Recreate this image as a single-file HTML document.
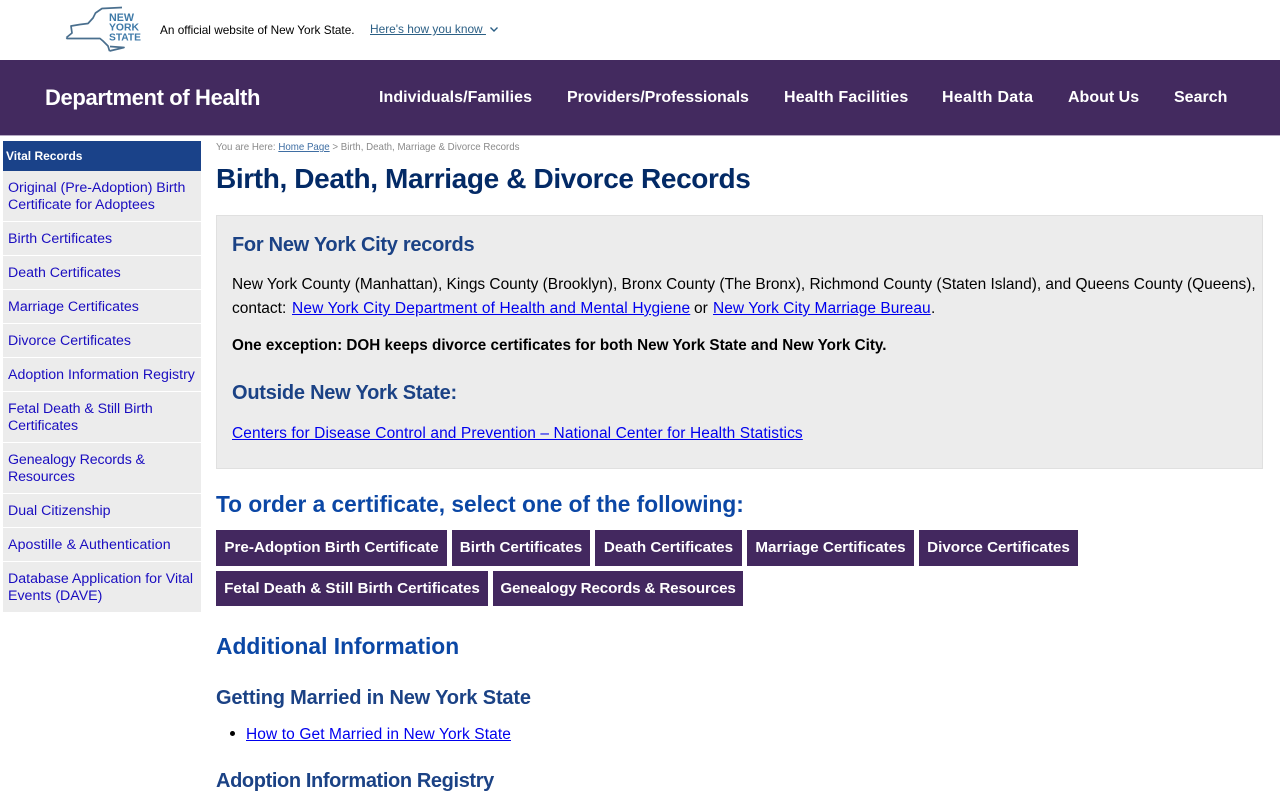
<!DOCTYPE html>
<html lang="en">
<head>
<meta charset="utf-8">
<title>Birth, Death, Marriage &amp; Divorce Records</title>
<style>
html,body{margin:0;padding:0;width:1280px;height:800px;overflow:hidden;background:#fff}
body{position:relative;font-family:"Liberation Sans",sans-serif;color:#000}
.t{position:absolute;white-space:nowrap;line-height:20px;margin:0;font-weight:normal}
.b{font-weight:bold}
a{color:#0000ee;text-decoration:underline}
.box{position:absolute}
.side{position:absolute;left:3px;width:198px;background:#ececec}
.side a{position:absolute;left:5px;top:9px;font-size:14.2px;line-height:17px;color:#1a0dc0;text-decoration:none;white-space:nowrap}
.btn{position:absolute;height:36px;background:#43285f;color:#fff;font-weight:bold;font-size:15.2px;line-height:36px;text-align:center;text-decoration:none;white-space:nowrap}
.nav{position:absolute;top:88px;color:#fff;font-weight:bold;font-size:16px;line-height:20px;white-space:nowrap;text-decoration:none}
h2.c,h3.c{color:#1b4285}
</style>
</head>
<body>
<svg class="box" style="left:60px;top:0" width="90" height="58" viewBox="60 0 90 58" fill="none">
<path d="M66.5 37.5 L72 33 L71 26 L80 24.5 L88 23.5 L93 18 L95.5 13 L102 8.5 L122 7.5 M66.5 37.5 L67 38.5 L100 38.5 L103 41 L108 46 L109.5 51 M109.5 51 L124 47.5 L110 46.5 M109.5 51 L122 48" stroke="#4a6f8e" stroke-width="1.7" stroke-linejoin="round"/>
<text x="109" y="21" font-family="Liberation Sans" font-weight="bold" font-size="11" fill="#3f7aa8" textLength="25" lengthAdjust="spacingAndGlyphs">NEW</text>
<text x="109" y="30.5" font-family="Liberation Sans" font-weight="bold" font-size="10.5" fill="#3f7aa8" textLength="30" lengthAdjust="spacingAndGlyphs">YORK</text>
<text x="109" y="40.5" font-family="Liberation Sans" font-weight="bold" font-size="10.5" fill="#3f7aa8" textLength="32" lengthAdjust="spacingAndGlyphs">STATE</text>
</svg>
<div class="t" style="left:160px;top:20px;font-size:11.8px">An official website of New York State.</div>
<a class="t" style="left:370px;top:19px;font-size:11.9px;color:#2b5f85" href="#">Here's how you know&nbsp;</a>
<svg class="box" style="left:489px;top:26px" width="10" height="7" viewBox="0 0 10 7" fill="none"><path d="M1.5 1.5 L5 5 L8.5 1.5" stroke="#2b5f85" stroke-width="1.4"/></svg>

<div class="box" style="left:0;top:60px;width:1280px;height:75px;background:#432a5f"></div>
<div class="box" style="left:0;top:135px;width:1280px;height:1px;background:#b5a9c2"></div>
<div class="t b" style="left:45px;top:88px;font-size:22px;color:#fff;letter-spacing:-.37px">Department of Health</div>
<a class="nav" style="left:379px;letter-spacing:.05px" href="#">Individuals/Families</a>
<a class="nav" style="left:567px;letter-spacing:-.06px" href="#">Providers/Professionals</a>
<a class="nav" style="left:784px;letter-spacing:.15px" href="#">Health Facilities</a>
<a class="nav" style="left:942px;letter-spacing:.3px" href="#">Health Data</a>
<a class="nav" style="left:1068px" href="#">About Us</a>
<a class="nav" style="left:1174px" href="#">Search</a>

<div class="box" style="left:3px;top:141px;width:198px;height:30px;background:#1a4289"></div>
<div class="t b" style="left:6px;top:146px;font-size:12px;color:#fff">Vital Records</div>
<div class="side" style="top:171px;height:50px"><a style="letter-spacing:-.03px" href="#">Original (Pre-Adoption) Birth<br>Certificate for Adoptees</a></div>
<div class="side" style="top:222px;height:33px"><a href="#">Birth Certificates</a></div>
<div class="side" style="top:256px;height:33px"><a href="#">Death Certificates</a></div>
<div class="side" style="top:290px;height:33px"><a href="#">Marriage Certificates</a></div>
<div class="side" style="top:324px;height:33px"><a href="#">Divorce Certificates</a></div>
<div class="side" style="top:358px;height:33px"><a href="#">Adoption Information Registry</a></div>
<div class="side" style="top:392px;height:50px"><a style="letter-spacing:-.08px" href="#">Fetal Death &amp; Still Birth<br>Certificates</a></div>
<div class="side" style="top:443px;height:50px"><a style="letter-spacing:-.1px" href="#">Genealogy Records &amp;<br>Resources</a></div>
<div class="side" style="top:494px;height:33px"><a href="#">Dual Citizenship</a></div>
<div class="side" style="top:528px;height:33px"><a style="letter-spacing:.1px" href="#">Apostille &amp; Authentication</a></div>
<div class="side" style="top:562px;height:50px"><a href="#">Database Application for Vital<br>Events (DAVE)</a></div>

<div class="t" style="left:216px;top:138px;font-size:9.72px;color:#8a8a8a">You are Here: <a href="#" style="color:#3f6ea3">Home Page</a> &gt; Birth, Death, Marriage &amp; Divorce Records</div>
<h1 class="t b" style="left:216px;top:169px;font-size:28px;color:#032a66;letter-spacing:-.37px">Birth, Death, Marriage &amp; Divorce Records</h1>

<div class="box" style="left:216px;top:215px;width:1045px;height:252px;background:#ececec;border:1px solid #e0e0e0"></div>
<h2 class="t b c" style="left:232px;top:235px;font-size:20px;letter-spacing:-.28px">For New York City records</h2>
<div class="t" style="left:232px;top:275px;font-size:15.45px">New York County (Manhattan), Kings County (Brooklyn), Bronx County (The Bronx), Richmond County (Staten Island), and Queens County (Queens),</div>
<div class="t" style="left:232px;top:299px;font-size:15.5px">contact:</div>
<a class="t" style="left:292px;top:299px;font-size:15.5px;letter-spacing:.15px" href="#">New York City Department of Health and Mental Hygiene</a>
<div class="t" style="left:694px;top:299px;font-size:15.5px">or</div>
<a class="t" style="left:713px;top:299px;font-size:15.5px;letter-spacing:.05px" href="#">New York City Marriage Bureau</a>
<div class="t" style="left:931px;top:299px;font-size:15.5px">.</div>
<div class="t b" style="left:232px;top:336px;font-size:15.25px">One exception: DOH keeps divorce certificates for both New York State and New York City.</div>
<h2 class="t b c" style="left:232px;top:383px;font-size:20px;letter-spacing:-.24px">Outside New York State:</h2>
<a class="t" style="left:232px;top:424px;font-size:15.5px;letter-spacing:.1px" href="#">Centers for Disease Control and Prevention – National Center for Health Statistics</a>

<h2 class="t b" style="left:216px;top:494px;font-size:22.7px;color:#0b47a5">To order a certificate, select one of the following:</h2>
<a class="btn" style="left:216px;top:530px;width:231px" href="#">Pre-Adoption Birth Certificate</a>
<a class="btn" style="left:452px;top:530px;width:138px" href="#">Birth Certificates</a>
<a class="btn" style="left:595px;top:530px;width:147px" href="#">Death Certificates</a>
<a class="btn" style="left:747px;top:530px;width:167px" href="#">Marriage Certificates</a>
<a class="btn" style="left:919px;top:530px;width:159px" href="#">Divorce Certificates</a>
<a class="btn" style="left:216px;top:571px;width:272px;height:35px" href="#">Fetal Death &amp; Still Birth Certificates</a>
<a class="btn" style="left:493px;top:571px;width:250px;height:35px;letter-spacing:-.15px" href="#">Genealogy Records &amp; Resources</a>

<h2 class="t b" style="left:216px;top:636px;font-size:22.8px;color:#0b47a5">Additional Information</h2>
<h3 class="t b c" style="left:216px;top:688px;font-size:20px;letter-spacing:-.17px">Getting Married in New York State</h3>
<div class="box" style="left:230px;top:731px;width:5px;height:5px;border-radius:50%;background:#000"></div>
<a class="t" style="left:246px;top:725px;font-size:15.5px;letter-spacing:.11px" href="#">How to Get Married in New York State</a>
<h3 class="t b c" style="left:216px;top:771px;font-size:20px;letter-spacing:-.38px">Adoption Information Registry</h3>
</body>
</html>
